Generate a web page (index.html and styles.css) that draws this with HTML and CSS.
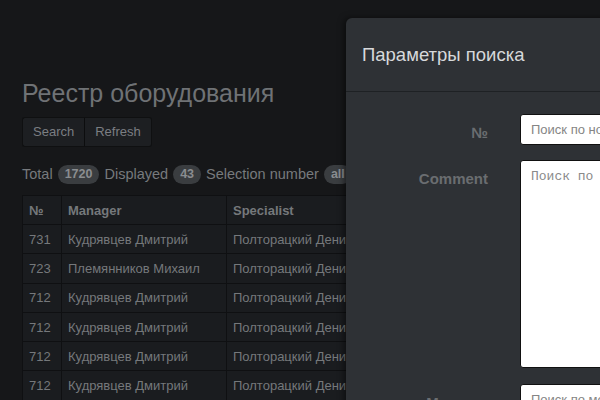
FILE: index.html
```html
<!DOCTYPE html>
<html>
<head>
<meta charset="utf-8">
<link rel="stylesheet" href="styles.css">
</head>
<body>
<div class="page">
  <h1 class="title">Реестр оборудования</h1>
  <div class="btn-group">
    <button class="btn">Search</button><button class="btn">Refresh</button>
  </div>
  <div class="stats">
    <span>Total</span><span class="badge">1720</span><span>Displayed</span><span class="badge">43</span><span>Selection number</span><span class="badge">all</span>
  </div>
  <table class="grid">
    <thead>
      <tr><th class="c-no">№</th><th class="c-man">Manager</th><th class="c-spec">Specialist</th></tr>
    </thead>
    <tbody>
      <tr><td>731</td><td>Кудрявцев Дмитрий</td><td>Полторацкий Денис</td></tr>
      <tr><td>723</td><td>Племянников Михаил</td><td>Полторацкий Денис</td></tr>
      <tr><td>712</td><td>Кудрявцев Дмитрий</td><td>Полторацкий Денис</td></tr>
      <tr><td>712</td><td>Кудрявцев Дмитрий</td><td>Полторацкий Денис</td></tr>
      <tr><td>712</td><td>Кудрявцев Дмитрий</td><td>Полторацкий Денис</td></tr>
      <tr><td>712</td><td>Кудрявцев Дмитрий</td><td>Полторацкий Денис</td></tr>
    </tbody>
  </table>
</div>
<div class="modal">
  <div class="modal-header">Параметры поиска</div>
  <div class="modal-body">
    <div class="form-row">
      <label class="form-label">№</label>
      <input class="form-input" type="text" placeholder="Поиск по номеру">
    </div>
    <div class="form-row">
      <label class="form-label">Comment</label>
      <textarea class="form-area" placeholder="Поиск по комментарию"></textarea>
    </div>
    <div class="form-row">
      <label class="form-label">Manager</label>
      <input class="form-input" type="text" placeholder="Поиск по менеджеру">
    </div>
  </div>
</div>
</body>
</html>
```

FILE: styles.css
```css
html, body {
  margin: 0;
  padding: 0;
  background: #161719;
  overflow: hidden;
  width: 600px;
  height: 400px;
}
body {
  font-family: "Liberation Sans", Arial, sans-serif;
  font-size: 13px;
  color: #777a7d;
}
.page {
  padding: 79px 0 0 22px;
  width: 900px;
}
.title {
  margin: 0 0 10px;
  font-size: 25px;
  font-weight: normal;
  line-height: 28px;
  color: #6f7275;
}
.btn-group {
  display: flex;
  margin-bottom: 16px;
}
.btn {
  font-family: inherit;
  font-size: 13px;
  color: #7b7e82;
  background: #1d1f22;
  border: 1px solid #0f1011;
  padding: 0 10px;
  height: 30px;
  line-height: 28px;
  margin: 0;
}
.btn:first-child {
  border-radius: 3px 0 0 3px;
  border-right: 1px solid #0c0d0e;
}
.btn:last-child {
  border-radius: 0 3px 3px 0;
  border-left: none;
}
.stats {
  display: flex;
  align-items: center;
  gap: 5px;
  font-size: 14.5px;
  line-height: 20px;
  color: #777a7d;
  white-space: nowrap;
  margin-bottom: 11px;
}
.badge {
  display: inline-block;
  background: #3a3d40;
  color: #8a8d90;
  font-weight: bold;
  font-size: 12.5px;
  line-height: 19px;
  padding: 0 7px;
  border-radius: 10px;
  margin-top: 2px;
}
.grid {
  border-collapse: collapse;
  background: #1a1c1f;
}
.grid th, .grid td {
  border: 1px solid #0f1012;
  text-align: left;
  padding: 0 6px;
  height: 28.3px;
  white-space: nowrap;
  color: #75787b;
}
.grid th {
  font-weight: bold;
  height: 28px;
}
.c-no { width: 26px; }
.c-man { width: 152px; }
.c-spec { width: 300px; }
.modal {
  position: absolute;
  left: 346px;
  top: 18px;
  width: 400px;
  height: 500px;
  background: #2e3135;
  border-radius: 6px 0 0 0;
  box-shadow: -2px 0 6px rgba(0,0,0,0.5);
}
.modal-header {
  height: 74px;
  box-sizing: border-box;
  padding: 26px 16px 0;
  font-size: 18.5px;
  line-height: 22px;
  color: #d7d9db;
  border-bottom: 1px solid #1e2124;
}
.modal-body {
  padding: 22px 0 0;
  display: flex;
  flex-direction: column;
  gap: 15px;
}
.form-row {
  display: flex;
  align-items: flex-start;
}
.form-row:last-child {
  margin-top: 1px;
}
.form-label {
  width: 142px;
  flex: none;
  box-sizing: border-box;
  text-align: right;
  font-weight: bold;
  font-size: 15px;
  color: #6a6d70;
  line-height: 20px;
  padding-top: 9px;
  margin-right: 32px;
}
.form-input {
  box-sizing: border-box;
  width: 300px;
  height: 31px;
  margin: 0;
  border: 1px solid #111;
  border-radius: 3px;
  background: #fff;
  padding: 0 10px;
  font-family: "Liberation Sans", Arial, sans-serif;
  font-size: 13px;
}
.form-input::placeholder {
  color: #858585;
}
.form-area {
  box-sizing: border-box;
  width: 300px;
  height: 208px;
  margin: 0;
  border: 1px solid #111;
  border-radius: 3px;
  background: #fff;
  padding: 8px 10px;
  font-family: "Liberation Mono", "Courier New", monospace;
  font-size: 13px;
  resize: none;
}
.form-area::placeholder {
  color: #8a8a8a;
}
```
